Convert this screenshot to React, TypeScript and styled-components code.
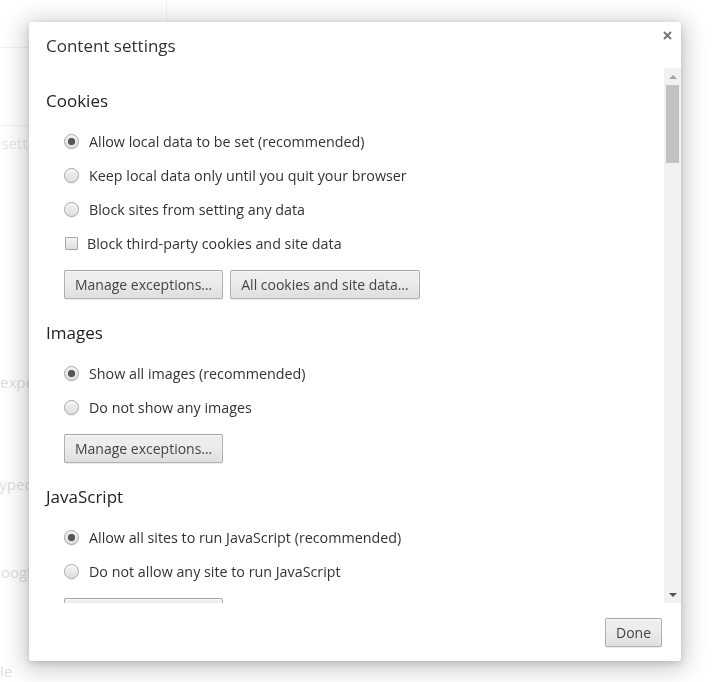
import styled, { createGlobalStyle } from 'styled-components';

const GlobalStyle = createGlobalStyle`
  html, body {
    margin: 0;
    padding: 0;
    height: 682px;
    overflow: hidden;
    background: #fff;
    font-family: "Open Sans", "Noto Sans", sans-serif;
  }
`;

type Option = { label: string; checked?: boolean; kind?: 'radio' | 'checkbox' };
type Section = { title: string; options: Option[]; buttons: string[] };

const sections: Section[] = [
    {
        title: 'Cookies',
        options: [
            { label: 'Allow local data to be set (recommended)', checked: true },
            { label: 'Keep local data only until you quit your browser' },
            { label: 'Block sites from setting any data' },
            { label: 'Block third-party cookies and site data', kind: 'checkbox' },
        ],
        buttons: ['Manage exceptions…', 'All cookies and site data…'],
    },
    {
        title: 'Images',
        options: [
            { label: 'Show all images (recommended)', checked: true },
            { label: 'Do not show any images' },
        ],
        buttons: ['Manage exceptions…'],
    },
    {
        title: 'JavaScript',
        options: [
            { label: 'Allow all sites to run JavaScript (recommended)', checked: true },
            { label: 'Do not allow any site to run JavaScript' },
        ],
        buttons: ['Manage exceptions…'],
    },
];

// faded settings page behind the dialog
const backdrop = [
    { text: 'Search settings', top: 125, indent: -50, input: true },
    { text: 'experiments', top: 372, indent: 0 },
    { text: 'typed', top: 474, indent: -6 },
    { text: 'Google', top: 562, indent: -10 },
    { text: 'le', top: 661, indent: 0 },
];

const App = () => {
    return (
        <>
            <GlobalStyle />
            <Page>
                <PageHeader />
                {backdrop.map((b, i) => (
                    <FaintLine key={i} $top={b.top} $indent={b.indent} $input={!!b.input}>
                        {b.text}
                    </FaintLine>
                ))}
            </Page>
            <Overlay>
                <Dialog>
                    <Header>
                        <Title>Content settings</Title>
                    </Header>
                    <CloseButton aria-label="Close">
                        <svg width="9" height="9" viewBox="0 0 9 9">
                            <path d="M1 1L8 8M8 1L1 8" stroke="#777" strokeWidth="2" />
                        </svg>
                    </CloseButton>
                    <Body>
                        <Scroller>
                            {sections.map((s) => (
                                <SectionBlock key={s.title}>
                                    <SectionTitle>{s.title}</SectionTitle>
                                    <OptionList>
                                        {s.options.map((o) => (
                                            <OptionRow key={o.label} $tight={o.kind === 'checkbox'}>
                                                {o.kind === 'checkbox' ? (
                                                    <CheckBox />
                                                ) : (
                                                    <Radio $checked={!!o.checked} />
                                                )}
                                                <OptionLabel>{o.label}</OptionLabel>
                                            </OptionRow>
                                        ))}
                                    </OptionList>
                                    <ButtonRow>
                                        {s.buttons.map((b) => (
                                            <Button key={b}>{b}</Button>
                                        ))}
                                    </ButtonRow>
                                </SectionBlock>
                            ))}
                        </Scroller>
                        <ScrollTrack>
                            <ArrowBox>
                                <svg width="8" height="4" viewBox="0 0 8 4">
                                    <path d="M0 4L4 0L8 4Z" fill="#a3a3a3" />
                                </svg>
                            </ArrowBox>
                            <Thumb />
                            <Spacer />
                            <ArrowBox>
                                <svg width="8" height="4" viewBox="0 0 8 4">
                                    <path d="M0 0L8 0L4 4Z" fill="#505050" />
                                </svg>
                            </ArrowBox>
                        </ScrollTrack>
                    </Body>
                    <Footer>
                        <Button>Done</Button>
                    </Footer>
                </Dialog>
            </Overlay>
        </>
    );
};

export default App;

// Styled Components
const Page = styled.div`
  position: relative;
  height: 682px;
  overflow: hidden;
  display: flex;
  flex-direction: column;
  font-size: 15px;
  color: #333;
`;

const PageHeader = styled.div`
  width: 167px;
  height: 48px;
  flex-shrink: 0;
  border-right: 1px solid #ccc;
  border-bottom: 1px solid #ccc;
  box-sizing: border-box;
`;

const FaintLine = styled.div<{ $top: number; $indent: number; $input: boolean }>`
  position: absolute;
  left: 0;
  top: ${(p) => p.$top}px;
  width: 200px;
  height: ${(p) => (p.$input ? '34px' : '20px')};
  line-height: ${(p) => (p.$input ? '34px' : '20px')};
  text-indent: ${(p) => p.$indent}px;
  white-space: nowrap;
  color: ${(p) => (p.$input ? '#aaa' : '#888')};
  border-top: ${(p) => (p.$input ? '1px solid #ccc' : 'none')};
  box-sizing: border-box;
`;

const Overlay = styled.div`
  position: fixed;
  inset: 0;
  background: rgba(255, 255, 255, 0.72);
  padding: 22px 0 0 29px;
  box-sizing: border-box;
`;

const Dialog = styled.div`
  position: relative;
  width: 652px;
  height: 639px;
  background: #fff;
  border-radius: 3px;
  box-shadow: 0 4px 23px 5px rgba(0, 0, 0, 0.2), 0 2px 6px rgba(0, 0, 0, 0.15);
  display: flex;
  flex-direction: column;
  overflow: hidden;
  color: #333;
`;

const Header = styled.div`
  height: 46px;
  flex-shrink: 0;
  display: flex;
  align-items: center;
  padding-left: 17px;
`;

const Title = styled.h1`
  margin: 0;
  font-size: 17px;
  font-weight: normal;
  color: #333;
`;

const CloseButton = styled.button`
  position: absolute;
  top: 9px;
  right: 9px;
  width: 9px;
  height: 9px;
  padding: 0;
  border: 0;
  background: none;
  display: flex;
`;

const Body = styled.div`
  height: 535px;
  flex-shrink: 0;
  display: flex;
`;

const Scroller = styled.div`
  flex: 1;
  overflow: hidden;
  padding: 21px 0 0 17px;
`;

const SectionBlock = styled.section`
  margin-bottom: 22px;
`;

const SectionTitle = styled.h3`
  margin: 0;
  font-size: 17px;
  line-height: 24px;
  font-weight: normal;
  color: #222;
`;

const OptionList = styled.div`
  margin: 11px 0 10px 18px;
  display: flex;
  flex-direction: column;
`;

const OptionRow = styled.label<{ $tight: boolean }>`
  height: 34px;
  display: flex;
  align-items: center;
  gap: ${(p) => (p.$tight ? '8px' : '10px')};
`;

const Radio = styled.span<{ $checked: boolean }>`
  width: 15px;
  height: 15px;
  box-sizing: border-box;
  border-radius: 50%;
  border: 1px solid #a6a6a6;
  background: ${(p) =>
        p.$checked
            ? 'radial-gradient(circle, #555 0, #555 3px, #777 3.5px, transparent 4px), linear-gradient(#ededed, #dedede)'
            : 'linear-gradient(#f4f4f4, #dedede)'};
  box-shadow: inset 0 1px 2px rgba(255, 255, 255, 0.8), 0 1px 0 rgba(0, 0, 0, 0.06);
  flex-shrink: 0;
`;

const CheckBox = styled.span`
  width: 13px;
  height: 13px;
  margin: 0 1px;
  box-sizing: border-box;
  border: 1px solid #a6a6a6;
  border-radius: 1px;
  background: linear-gradient(#f4f4f4, #dedede);
  flex-shrink: 0;
`;

const OptionLabel = styled.span`
  font-size: 14.3px;
  color: #333;
  white-space: nowrap;
`;

const ButtonRow = styled.div`
  margin-left: 18px;
  display: flex;
  gap: 7px;
`;

const Button = styled.button`
  height: 29px;
  padding: 0 10px;
  font-family: "Open Sans", "Noto Sans", sans-serif;
  font-size: 14px;
  color: #444;
  border: 1px solid rgba(0, 0, 0, 0.25);
  border-radius: 2px;
  background: linear-gradient(#ededed, #ededed 38%, #dedede);
  box-shadow: 0 1px 0 rgba(0, 0, 0, 0.08), inset 0 1px 2px rgba(255, 255, 255, 0.75);
  white-space: nowrap;
`;

const ScrollTrack = styled.div`
  width: 17px;
  background: #f1f1f1;
  display: flex;
  flex-direction: column;
  align-items: center;
`;

const ArrowBox = styled.div`
  width: 17px;
  height: 17px;
  flex-shrink: 0;
  display: flex;
  align-items: center;
  justify-content: center;
`;

const Thumb = styled.div`
  width: 13px;
  height: 78px;
  background: #c1c1c1;
`;

const Spacer = styled.div`
  flex: 1;
`;

const Footer = styled.div`
  flex: 1;
  display: flex;
  justify-content: flex-end;
  align-items: flex-start;
  padding: 15px 19px 0 0;
`;
